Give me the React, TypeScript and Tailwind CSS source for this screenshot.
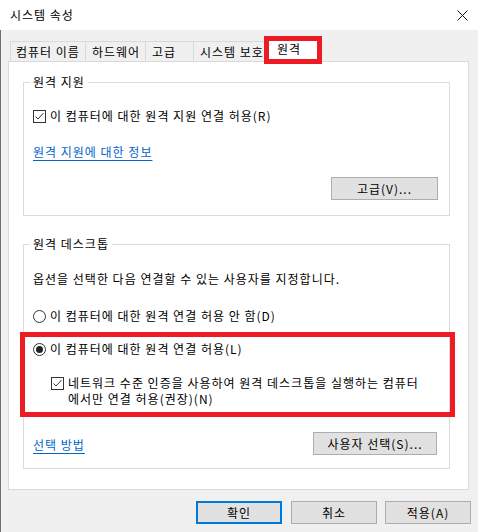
import React from "react";

function CheckBox() {
  return (
    <svg width="13" height="13" viewBox="0 0 13 13" className="shrink-0 block">
      <rect x="0.5" y="0.5" width="12" height="12" fill="#fff" stroke="#333" />
      <polyline points="2.5,6.5 5,9 10.5,3" fill="none" stroke="#333" strokeWidth="1" />
    </svg>
  );
}

function Radio({ checked }: { checked?: boolean }) {
  return (
    <svg width="13" height="13" viewBox="0 0 13 13" className="shrink-0 block">
      <circle cx="6.5" cy="6.5" r="6" fill="#fff" stroke="#333" />
      {checked && <circle cx="6.5" cy="6.5" r="3.5" fill="#222" />}
    </svg>
  );
}

function Btn({ children, w, primary }: { children: React.ReactNode; w: string; primary?: boolean }) {
  return (
    <div
      className={
        "h-[23px] flex items-center justify-center bg-[#e1e1e1] " +
        w +
        (primary ? " border-2 border-[#0078d7]" : " border border-[#adadad]")
      }
    >
      {children}
    </div>
  );
}

export default function App() {
  return (
    <div className="w-[478px] h-[532px] bg-[#f0f0f0] flex flex-col font-['Noto_Sans_CJK_KR',sans-serif] text-[12px] leading-[16px] tracking-[1px] text-black overflow-hidden">
      {/* title bar */}
      <div className="h-[30px] shrink-0 bg-white flex items-center justify-between pl-[10px] pr-[10px]">
        <span>시스템 속성</span>
        <svg width="11" height="11" viewBox="0 0 11 11" className="block">
          <path d="M0.5 0.5 L10.5 10.5 M10.5 0.5 L0.5 10.5" stroke="#111" strokeWidth="1" />
        </svg>
      </div>

      <div className="flex-1 border-l border-[#707070] flex flex-col">
        {/* tabs */}
        <div className="h-[31px] shrink-0 flex items-end pl-[9px]">
          <div className="w-[75px] h-[20px] border-l border-t border-[#d9d9d9] flex items-center pl-[5px] whitespace-nowrap">
            컴퓨터 이름
          </div>
          <div className="w-[60px] h-[20px] border-l border-t border-[#d9d9d9] flex items-center pl-[6px] whitespace-nowrap">
            하드웨어
          </div>
          <div className="w-[48px] h-[20px] border-l border-t border-[#d9d9d9] flex items-center pl-[6px] whitespace-nowrap">
            고급
          </div>
          <div className="w-[71px] h-[20px] border-l border-t border-[#d9d9d9] flex items-center pl-[6px] whitespace-nowrap overflow-hidden">
            시스템 보호
          </div>
          <div className="relative z-10 w-[58px] h-[28px] -mb-[3px] bg-white border-[5px] border-[#ed1c24] flex items-center pl-[8px] pb-[2px]">
            원격
          </div>
        </div>

        {/* panel */}
        <div className="ml-[7px] w-[461px] h-[429px] shrink-0 bg-white border border-[#d9d9d9] flex flex-col">
          {/* group 1 */}
          <div className="relative ml-[14px] mt-[20px] w-[427px] h-[134px] border border-[#dcdcdc] flex flex-col">
            <span className="absolute -top-[9px] left-[6px] bg-white px-[3px]">원격 지원</span>
            <div className="mt-[25px] pl-[9px] h-[16px] flex items-center gap-[4px]">
              <CheckBox />
              <span>이 컴퓨터에 대한 원격 지원 연결 허용(R)</span>
            </div>
            <div className="mt-[20px] pl-[9px] h-[16px]">
              <span className="text-[#0066cc] underline underline-offset-[3px]">원격 지원에 대한 정보</span>
            </div>
            <div className="mt-[17px] self-end mr-[11px]">
              <Btn w="w-[107px]">고급(V)...</Btn>
            </div>
          </div>

          {/* group 2 */}
          <div className="relative ml-[14px] mt-[28px] w-[427px] h-[225px] border border-[#dcdcdc] flex flex-col">
            <span className="absolute -top-[9px] left-[6px] bg-white px-[3px]">원격 데스크톱</span>
            <div className="mt-[26px] pl-[9px] h-[16px] whitespace-nowrap">옵션을 선택한 다음 연결할 수 있는 사용자를 지정합니다.</div>
            <div className="mt-[21px] pl-[9px] h-[16px] flex items-center gap-[4px]">
              <Radio />
              <span>이 컴퓨터에 대한 원격 연결 허용 안 함(D)</span>
            </div>
            <div className="mt-[8px] -ml-[4px] -mr-[6px] h-[85px] border-[5px] border-[#ed1c24] flex flex-col">
              <div className="mt-[4px] pl-[8px] h-[16px] flex items-center gap-[4px]">
                <Radio checked />
                <span>이 컴퓨터에 대한 원격 연결 허용(L)</span>
              </div>
              <div className="mt-[18px] pl-[26px] flex items-start gap-[4px]">
                <div className="mt-[2px]">
                  <CheckBox />
                </div>
                <span className="whitespace-nowrap">
                  네트워크 수준 인증을 사용하여 원격 데스크톱을 실행하는 컴퓨터
                  <br />
                  에서만 연결 허용(권장)(N)
                </span>
              </div>
            </div>
            <div className="mt-[15px] pl-[9px] pr-[12px] flex items-center justify-between">
              <span className="text-[#0066cc] underline underline-offset-[3px] pt-[2px]">선택 방법</span>
              <Btn w="w-[124px]">사용자 선택(S)...</Btn>
            </div>
          </div>
        </div>

        {/* bottom buttons */}
        <div className="mt-[11px] flex justify-end pr-[7px]">
          <Btn w="w-[86px]" primary>
            확인
          </Btn>
          <div className="ml-[9px]">
            <Btn w="w-[86px]">취소</Btn>
          </div>
          <div className="ml-[8px]">
            <Btn w="w-[86px]">적용(A)</Btn>
          </div>
        </div>
      </div>
    </div>
  );
}
